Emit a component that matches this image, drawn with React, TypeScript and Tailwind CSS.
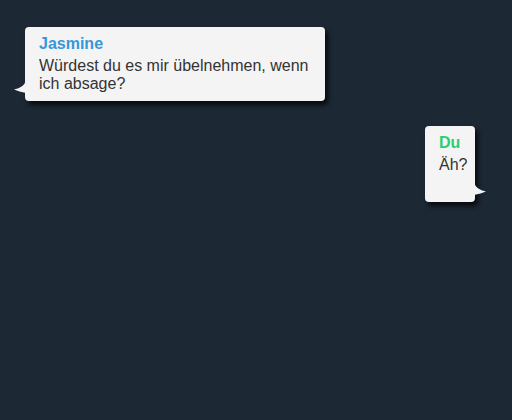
import React from 'react';

type Msg = {
  from: string;
  text: string;
  mine: boolean;
};

const messages: Msg[] = [
  { from: 'Jasmine', text: 'Würdest du es mir übelnehmen, wenn ich absage?', mine: false },
  { from: 'Du', text: 'Äh?', mine: true },
];

const Tail: React.FC<{ side: 'left' | 'right' }> = ({ side }) =>
  side === 'left' ? (
    <svg
      className="absolute left-[-11px] bottom-[8px]"
      width="12"
      height="13"
      viewBox="0 0 12 13"
    >
      <path d="M12 0 Q10 8 0 9.5 Q5 11.5 12 13 Z" fill="#f4f4f4" />
    </svg>
  ) : (
    <svg
      className="absolute right-[-11px] bottom-[7px]"
      width="12"
      height="13"
      viewBox="0 0 12 13"
    >
      <path d="M0 0 Q2 8 12 9.5 Q7 11.5 0 13 Z" fill="#f4f4f4" />
    </svg>
  );

const Bubble: React.FC<{ msg: Msg }> = ({ msg }) => (
  <div
    className={`relative rounded-[4px] bg-[#f4f4f4] pt-[8px] pb-[8px] pl-[14px] shadow-[3px_4px_5px_rgba(0,0,0,0.75)] ${
      msg.mine ? 'w-[50px] h-[76px] pr-0' : 'w-[300px] pr-[12px]'
    }`}
  >
    <div
      className={`text-[16px] font-bold leading-[18px] mb-[4px] ${
        msg.mine ? 'text-[#2ecc71]' : 'text-[#3498db]'
      }`}
    >
      {msg.from}
    </div>
    <div className="text-[16px] leading-[18px] text-[#333333]">{msg.text}</div>
    <Tail side={msg.mine ? 'right' : 'left'} />
  </div>
);

export default function App() {
  return (
    <div
      className="w-[512px] h-[420px] bg-[#1d2835] overflow-hidden"
      style={{ fontFamily: '"Liberation Sans", Arial, sans-serif' }}
    >
      <div className="flex flex-col gap-[25px] pt-[27px] pl-[25px] pr-[37px]">
        {messages.map((m, i) => (
          <div key={i} className={`flex ${m.mine ? 'justify-end' : 'justify-start'}`}>
            <Bubble msg={m} />
          </div>
        ))}
      </div>
    </div>
  );
}
